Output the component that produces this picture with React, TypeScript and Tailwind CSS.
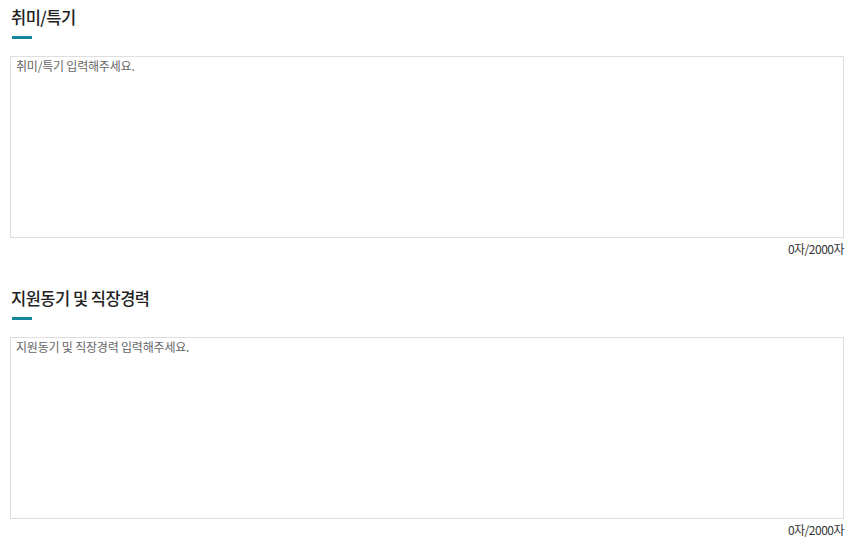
const sections = [
  { title: '취미/특기', placeholder: '취미/특기 입력해주세요.' },
  { title: '지원동기 및 직장경력', placeholder: '지원동기 및 직장경력 입력해주세요.' },
];

function Section({ title, placeholder }: { title: string; placeholder: string }) {
  return (
    <div>
      <h3 className="text-[16.5px] leading-[24px] font-medium text-[#222] pl-[11px] tracking-[-0.5px]">{title}</h3>
      <div className="ml-[12px] mt-[7px] w-[20px] h-[3px] bg-[#16879a]" />
      <textarea
        placeholder={placeholder}
        className="block mt-[17px] w-[834px] h-[182px] ml-[10px] border border-[#dedede] px-[5px] pt-[1px] text-[12px] leading-[16px] tracking-[-0.2px] text-[#333] placeholder:text-[#666] resize-none outline-none"
      />
      <p className="w-[844px] text-right text-[12px] leading-[22px] text-[#333] tracking-[-0.5px]">0자/2000자</p>
    </div>
  );
}

export default function App() {
  return (
    <div
      className="w-[856px] h-[543px] bg-white pt-[5px] flex flex-col gap-[26px] overflow-hidden"
      style={{ fontFamily: '"Noto Sans CJK KR", "Noto Sans", sans-serif' }}
    >
      {sections.map((s) => (
        <Section key={s.title} {...s} />
      ))}
    </div>
  );
}
